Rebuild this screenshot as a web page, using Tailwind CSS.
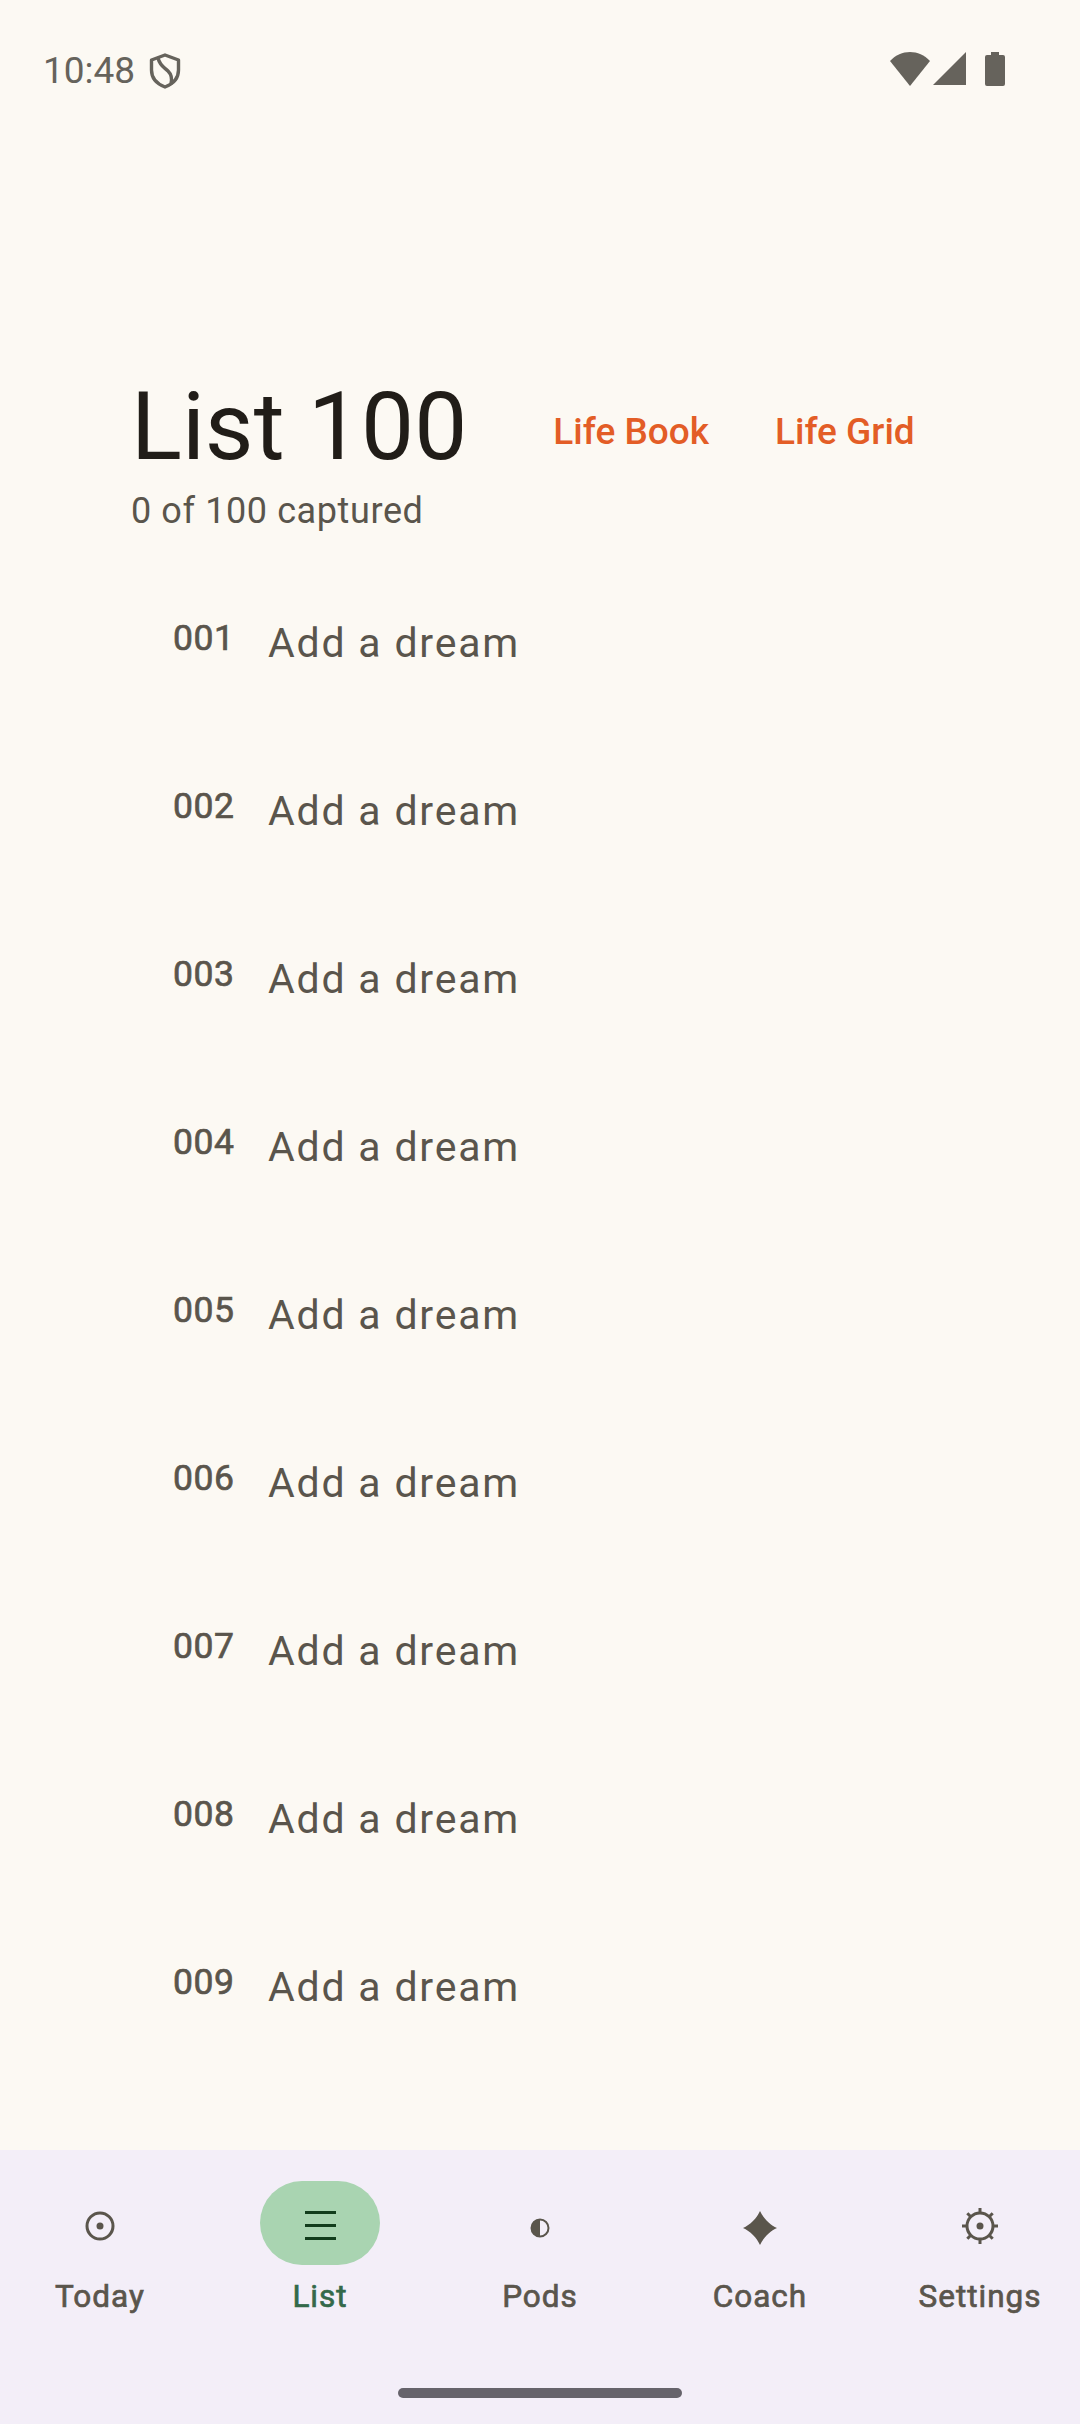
<!DOCTYPE html>
<html lang="en">
<head>
  <meta charset="UTF-8">
  <title>List 100</title>
  <meta name="viewport" content="width=device-width, initial-scale=1" />
  <script src="https://cdn.jsdelivr.net/npm/@tailwindcss/browser@4"></script>
</head>
<body class="bg-[#fcf9f3]">
<div class="h-[2424px] w-[1080px] flex flex-col overflow-hidden font-['Roboto',sans-serif] text-[#5a554c]">

  <!-- status bar -->
  <div class="h-[140px] shrink-0 flex items-start justify-between pt-[51px] pl-[43px] pr-[75px]">
    <div class="flex items-center gap-[14px] h-[40px]">
      <span class="text-[37px] leading-[40px] text-[#66635c]">10:48</span>
      <svg class="w-[32px] h-[36px]" viewBox="0 0 32 36" fill="none" stroke="#66635c" stroke-width="3.4" stroke-linejoin="round">
        <path d="M16 2 L29.500 7 V17 C29.500 25 24 31 16 34 C8 31 2.500 25 2.500 17 V7 Z"/>
        <path d="M9 5 C11 13 15 14 19 18 C23 22 23 27 22 31"/>
      </svg>
    </div>
    <div class="flex items-center gap-[3px] h-[36px]">
      <svg class="w-[40px] h-[34px]" viewBox="0 0 40 34" fill="#66635c"><path d="M0 9 C11 -3 29 -3 40 9 L20 34 Z"/></svg>
      <svg class="w-[34px] h-[34px]" viewBox="0 0 34 34" fill="#66635c"><path d="M33 0 V33 H0 Z"/></svg>
      <svg class="w-[20px] h-[34px] ml-[15px]" viewBox="0 0 20 34" fill="#66635c"><path d="M6 0 H14 V3 H18 Q20 3 20 5 V32 Q20 34 18 34 H2 Q0 34 0 32 V5 Q0 3 2 3 H6 Z"/></svg>
    </div>
  </div>

  <!-- header -->
  <div class="shrink-0 pl-[131px] pt-[232px]">
    <div class="flex items-start">
      <h1 class="text-[94.500px] leading-[110px] text-[#211d18]">List 100</h1>
      <a class="ml-[86px] mt-[38px] text-[37px] leading-[44px] font-medium text-[#e35d26]">Life Book</a>
      <a class="ml-[66px] mt-[38px] text-[37px] leading-[44px] font-medium text-[#e35d26]">Life Grid</a>
    </div>
    <p class="text-[36px] leading-[44px] mt-[7px] tracking-[0.6px]">0 of 100 captured</p>
  </div>

  <!-- dream rows -->
  <div class="flex-1 overflow-hidden pl-[173px] pt-[83px]">
    <div class="flex h-[168px] items-start"><span class="w-[95px] text-[35.500px] leading-[44px] tracking-[0.5px] [-webkit-text-stroke:0.7px_#5a554c]">001</span><span class="text-[41px] leading-[52px] mt-[1px] tracking-[1.8px]">Add a dream</span></div>
    <div class="flex h-[168px] items-start"><span class="w-[95px] text-[35.500px] leading-[44px] tracking-[0.5px] [-webkit-text-stroke:0.7px_#5a554c]">002</span><span class="text-[41px] leading-[52px] mt-[1px] tracking-[1.8px]">Add a dream</span></div>
    <div class="flex h-[168px] items-start"><span class="w-[95px] text-[35.500px] leading-[44px] tracking-[0.5px] [-webkit-text-stroke:0.7px_#5a554c]">003</span><span class="text-[41px] leading-[52px] mt-[1px] tracking-[1.8px]">Add a dream</span></div>
    <div class="flex h-[168px] items-start"><span class="w-[95px] text-[35.500px] leading-[44px] tracking-[0.5px] [-webkit-text-stroke:0.7px_#5a554c]">004</span><span class="text-[41px] leading-[52px] mt-[1px] tracking-[1.8px]">Add a dream</span></div>
    <div class="flex h-[168px] items-start"><span class="w-[95px] text-[35.500px] leading-[44px] tracking-[0.5px] [-webkit-text-stroke:0.7px_#5a554c]">005</span><span class="text-[41px] leading-[52px] mt-[1px] tracking-[1.8px]">Add a dream</span></div>
    <div class="flex h-[168px] items-start"><span class="w-[95px] text-[35.500px] leading-[44px] tracking-[0.5px] [-webkit-text-stroke:0.7px_#5a554c]">006</span><span class="text-[41px] leading-[52px] mt-[1px] tracking-[1.8px]">Add a dream</span></div>
    <div class="flex h-[168px] items-start"><span class="w-[95px] text-[35.500px] leading-[44px] tracking-[0.5px] [-webkit-text-stroke:0.7px_#5a554c]">007</span><span class="text-[41px] leading-[52px] mt-[1px] tracking-[1.8px]">Add a dream</span></div>
    <div class="flex h-[168px] items-start"><span class="w-[95px] text-[35.500px] leading-[44px] tracking-[0.5px] [-webkit-text-stroke:0.7px_#5a554c]">008</span><span class="text-[41px] leading-[52px] mt-[1px] tracking-[1.8px]">Add a dream</span></div>
    <div class="flex h-[168px] items-start"><span class="w-[95px] text-[35.500px] leading-[44px] tracking-[0.5px] [-webkit-text-stroke:0.7px_#5a554c]">009</span><span class="text-[41px] leading-[52px] mt-[1px] tracking-[1.8px]">Add a dream</span></div>
  </div>

  <!-- bottom nav -->
  <nav class="h-[274px] shrink-0 bg-[#f3eef8] pt-[31px] flex flex-col">
    <div class="grid grid-cols-5 gap-[20px]">
      <div class="flex flex-col items-center">
        <div class="h-[84px] w-[120px] flex items-center justify-center">
          <svg class="w-[32px] h-[32px] mt-[6px]" viewBox="0 0 32 32" fill="none"><circle cx="16" cy="16" r="13" stroke="#5a554c" stroke-width="3"/><circle cx="16" cy="16" r="3.500" fill="#5a554c"/></svg>
        </div>
        <span class="mt-[12px] text-[31.500px] leading-[40px] tracking-[1px] [-webkit-text-stroke:0.7px_#5a554c]">Today</span>
      </div>
      <div class="flex flex-col items-center">
        <div class="h-[84px] w-[120px] rounded-[42px] bg-[#a9d4b1] flex items-center justify-center">
          <div class="flex flex-col gap-[10px] w-[31px] mt-[4px]">
            <div class="h-[3px] bg-[#123d1c]"></div>
            <div class="h-[3px] bg-[#123d1c]"></div>
            <div class="h-[3px] bg-[#123d1c]"></div>
          </div>
        </div>
        <span class="mt-[12px] text-[31.500px] leading-[40px] tracking-[1px] text-[#33694a] [-webkit-text-stroke:0.7px_#33694a]">List</span>
      </div>
      <div class="flex flex-col items-center">
        <div class="h-[84px] w-[120px] flex items-center justify-center">
          <svg class="w-[20px] h-[20px] mt-[10px]" viewBox="0 0 20 20" fill="none"><circle cx="10" cy="10" r="8.500" stroke="#5a554c" stroke-width="2"/><path d="M10 1.500 A8.500 8.500 0 0 0 10 18.500 Z" fill="#5a554c"/></svg>
        </div>
        <span class="mt-[12px] text-[31.500px] leading-[40px] tracking-[1px] [-webkit-text-stroke:0.7px_#5a554c]">Pods</span>
      </div>
      <div class="flex flex-col items-center">
        <div class="h-[84px] w-[120px] flex items-center justify-center">
          <svg class="w-[34px] h-[34px] mt-[10px]" viewBox="0 0 34 34" fill="#5a554c"><path d="M17 0 C20 7 27 14 34 17 C27 20 20 27 17 34 C14 27 7 20 0 17 C7 14 14 7 17 0 Z"/></svg>
        </div>
        <span class="mt-[12px] text-[31.500px] leading-[40px] tracking-[1px] [-webkit-text-stroke:0.7px_#5a554c]">Coach</span>
      </div>
      <div class="flex flex-col items-center">
        <div class="h-[84px] w-[120px] flex items-center justify-center">
          <svg class="w-[38px] h-[38px] mt-[6px]" viewBox="0 0 38 38" fill="none" stroke="#5a554c" stroke-width="3"><circle cx="19" cy="19" r="13"/><path d="M19 1 V6 M19 32 V37 M1 19 H6 M32 19 H37 M6.300 6.300 L9.800 9.800 M28.200 28.200 L31.700 31.700 M31.700 6.300 L28.200 9.800 M9.800 28.200 L6.300 31.700"/><circle cx="19" cy="19" r="3.500" fill="#5a554c" stroke="none"/></svg>
        </div>
        <span class="mt-[12px] text-[31.500px] leading-[40px] tracking-[1px] [-webkit-text-stroke:0.7px_#5a554c]">Settings</span>
      </div>
    </div>
    <div class="mt-[71px] mx-auto w-[284px] h-[10px] rounded-full bg-[#66636b]"></div>
  </nav>
</div>
</body>
</html>
